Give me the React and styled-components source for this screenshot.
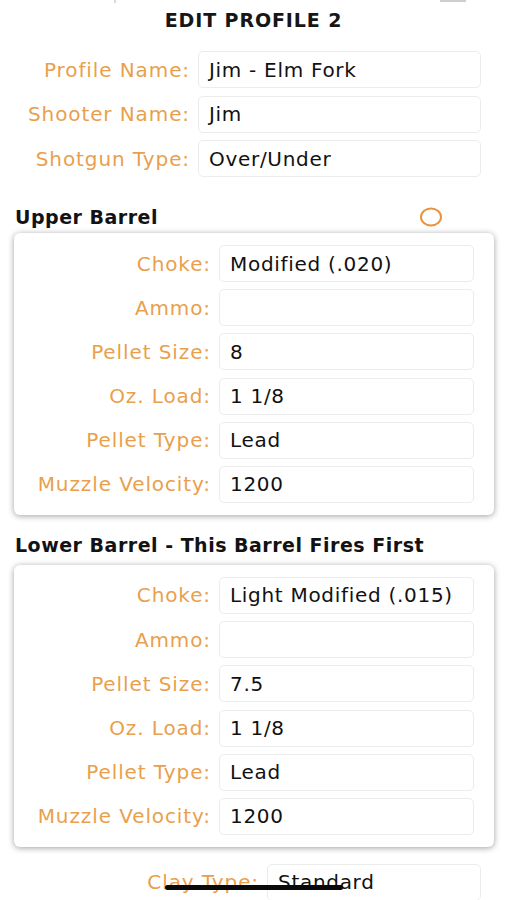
import styled, { createGlobalStyle } from "styled-components";

const orange = "#e99f4c";

const GlobalStyle = createGlobalStyle`
  html, body {
    margin: 0;
    padding: 0;
    background: #ffffff;
  }
  body {
    font-family: "DejaVu Sans", "Open Sans", sans-serif;
    color: #111111;
  }
`;

const profileFields = [
  { label: "Profile Name:", value: "Jim - Elm Fork" },
  { label: "Shooter Name:", value: "Jim" },
  { label: "Shotgun Type:", value: "Over/Under" },
];

const upperBarrel = [
  { label: "Choke:", value: "Modified (.020)" },
  { label: "Ammo:", value: "" },
  { label: "Pellet Size:", value: "8" },
  { label: "Oz. Load:", value: "1 1/8" },
  { label: "Pellet Type:", value: "Lead" },
  { label: "Muzzle Velocity:", value: "1200" },
];

const lowerBarrel = [
  { label: "Choke:", value: "Light Modified (.015)" },
  { label: "Ammo:", value: "" },
  { label: "Pellet Size:", value: "7.5" },
  { label: "Oz. Load:", value: "1 1/8" },
  { label: "Pellet Type:", value: "Lead" },
  { label: "Muzzle Velocity:", value: "1200" },
];

function FieldRow({ label, value, labelWidth }) {
  return (
    <Row $labelWidth={labelWidth}>
      <Label>{label}</Label>
      <Field>{value}</Field>
    </Row>
  );
}

function BarrelCard({ fields }) {
  return (
    <Card>
      {fields.map((f) => (
        <FieldRow key={f.label} label={f.label} value={f.value} labelWidth={197} />
      ))}
    </Card>
  );
}

export default function App() {
  return (
    <Page>
      <GlobalStyle />
      <StatusMarks>
        <span className="tick" />
        <span className="bar" />
      </StatusMarks>
      <Title>EDIT PROFILE 2</Title>

      <Profile>
        {profileFields.map((f) => (
          <FieldRow key={f.label} label={f.label} value={f.value} labelWidth={190} />
        ))}
      </Profile>

      <SectionHead className="upper">
        <h2>Upper Barrel</h2>
        <svg width="24" height="20" viewBox="0 0 24 20">
          <ellipse cx="12" cy="10" rx="10" ry="8.4" fill="none" stroke="#e8923a" strokeWidth="2" />
        </svg>
      </SectionHead>
      <BarrelCard fields={upperBarrel} />

      <SectionHead className="lower">
        <h2>Lower Barrel - This Barrel Fires First</h2>
      </SectionHead>
      <BarrelCard fields={lowerBarrel} />

      <ClayRow>
        <FieldRow label="Clay Type:" value="Standard" labelWidth={259} />
      </ClayRow>

      <HomeIndicator />
    </Page>
  );
}

const Page = styled.div`
  position: relative;
  width: 507px;
  height: 900px;
  overflow: hidden;
  box-sizing: border-box;
  padding-top: 7px;
`;

const StatusMarks = styled.div`
  position: absolute;
  top: 0;
  left: 0;
  right: 0;
  height: 4px;

  .tick {
    position: absolute;
    left: 114px;
    top: 0;
    width: 2px;
    height: 3px;
    background: #d8d8d8;
  }

  .bar {
    position: absolute;
    left: 440px;
    top: 0;
    width: 26px;
    height: 2px;
    background: #cfcfcf;
  }
`;

const Title = styled.h1`
  margin: 0;
  text-align: center;
  font-size: 19px;
  line-height: 26px;
  font-weight: 700;
  letter-spacing: 0.9px;
  color: #161616;
`;

const Profile = styled.div`
  display: flex;
  flex-direction: column;
  gap: 7.5px;
  margin-top: 18px;
  padding-right: 26px;
`;

const Row = styled.div`
  display: grid;
  grid-template-columns: ${(p) => p.$labelWidth}px 1fr;
  column-gap: 8px;
  align-items: center;
  height: 37px;
`;

const Label = styled.div`
  text-align: right;
  font-size: 20px;
  color: ${orange};
  white-space: nowrap;
  letter-spacing: 0.9px;
`;

const Field = styled.div`
  height: 37px;
  box-sizing: border-box;
  border: 1px solid #ececec;
  border-radius: 5px;
  padding: 0 10px;
  display: flex;
  align-items: center;
  font-size: 20px;
  color: #111111;
  white-space: nowrap;
  letter-spacing: 0.7px;
`;

const SectionHead = styled.div`
  display: flex;
  align-items: center;
  justify-content: space-between;
  height: 24px;
  padding: 0 64px 0 15px;

  h2 {
    margin: 0;
    font-size: 19px;
    font-weight: 700;
    color: #121212;
    letter-spacing: 0.5px;
  }

  &.upper {
    margin: 28px 0 4px;
  }

  &.lower {
    margin: 18px 0 8px;
  }
`;

const Card = styled.div`
  margin: 0 13px 0 14px;
  padding: 12px 20px 12px 0;
  display: flex;
  flex-direction: column;
  gap: 7.2px;
  background: #ffffff;
  border-radius: 6px;
  box-shadow: 0 1px 6px rgba(0, 0, 0, 0.38);
`;

const ClayRow = styled.div`
  margin-top: 17px;
  padding-right: 26px;
`;

const HomeIndicator = styled.div`
  position: absolute;
  left: 165px;
  top: 885px;
  width: 178px;
  height: 5px;
  border-radius: 3px;
  background: #0a0a0a;
`;
